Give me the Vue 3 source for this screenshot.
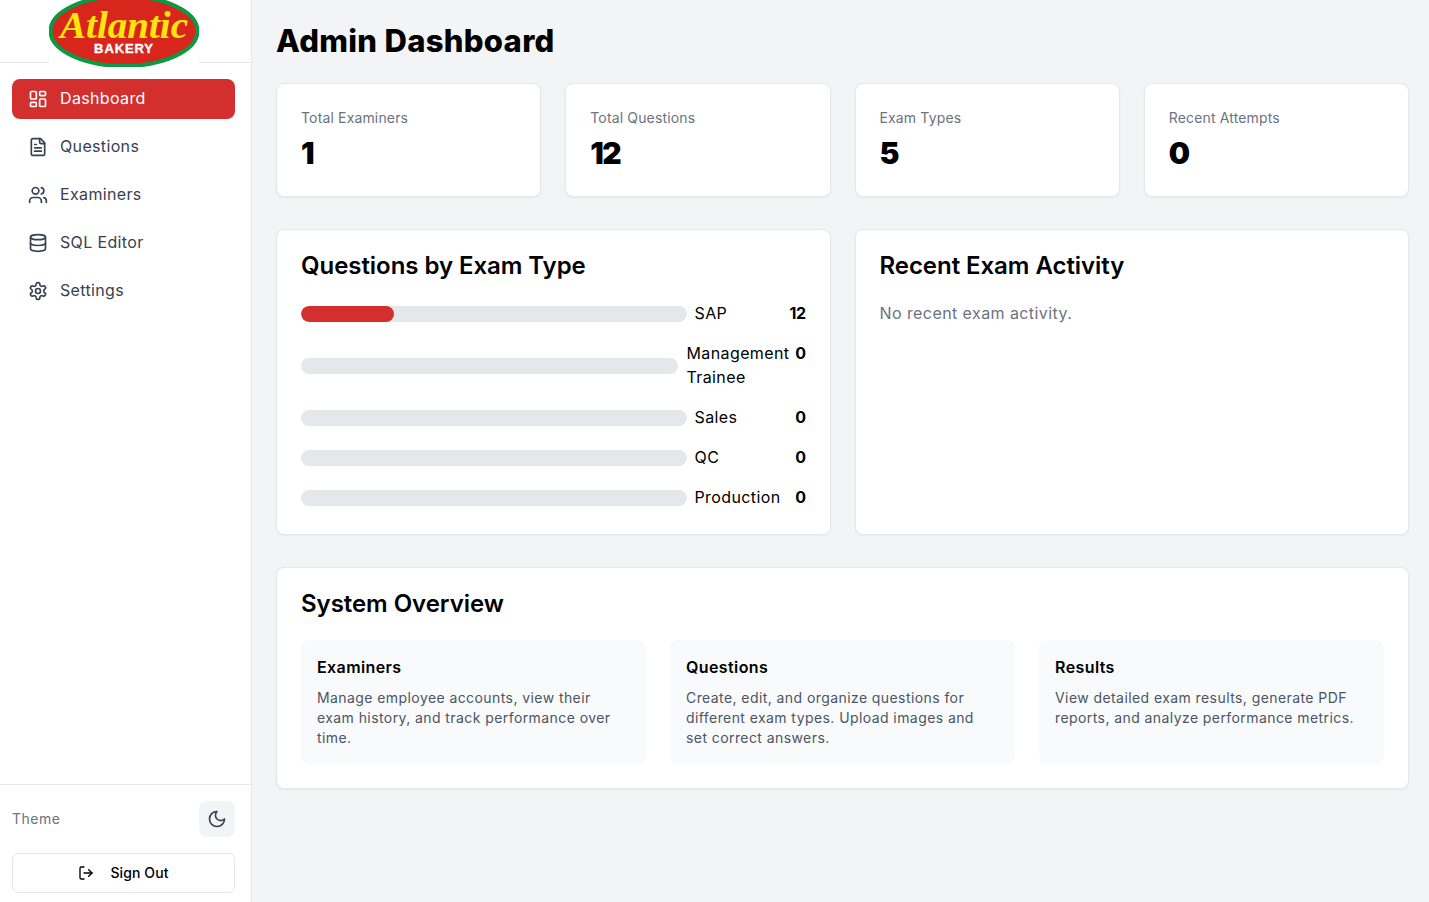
<script setup>
const nav = [
  { label: 'Dashboard', icon: 'dash', active: true },
  { label: 'Questions', icon: 'file' },
  { label: 'Examiners', icon: 'users' },
  { label: 'SQL Editor', icon: 'db' },
  { label: 'Settings', icon: 'gear' },
]
const stats = [
  { label: 'Total Examiners', value: 1 },
  { label: 'Total Questions', value: 12 },
  { label: 'Exam Types', value: 5 },
  { label: 'Recent Attempts', value: 0 },
]
const rows = [
  { label: 'SAP', value: 12, pct: 24 },
  { label: 'Management Trainee', value: 0, pct: 0 },
  { label: 'Sales', value: 0, pct: 0 },
  { label: 'QC', value: 0, pct: 0 },
  { label: 'Production', value: 0, pct: 0 },
]
const tiles = [
  { title: 'Examiners', text: 'Manage employee accounts, view their exam history, and track performance over time.' },
  { title: 'Questions', text: 'Create, edit, and organize questions for different exam types. Upload images and set correct answers.' },
  { title: 'Results', text: 'View detailed exam results, generate PDF reports, and analyze performance metrics.' },
]
</script>

<template>
  <div class="app">
    <aside class="sidebar">
      <div class="brand">
        <svg class="logo" width="150" height="72" viewBox="0 0 150 72">
          <rect x="0" y="0" width="150" height="72" fill="#fff" />
          <ellipse cx="75" cy="36" rx="73.5" ry="35" fill="#d9261c" stroke="#0a9a44" stroke-width="4" />
          <text class="logo-script" x="11" y="42.5" textLength="128" lengthAdjust="spacingAndGlyphs">Atlantic</text>
          <text class="logo-sub" x="75" y="57.5" text-anchor="middle">BAKERY</text>
        </svg>
      </div>
      <nav class="nav">
        <a v-for="item in nav" :key="item.label" class="nav-item" :class="{ active: item.active }">
          <svg class="icon" viewBox="0 0 24 24">
            <template v-if="item.icon === 'dash'">
              <rect x="3" y="3" width="7" height="9" rx="1" />
              <rect x="14" y="3" width="7" height="5" rx="1" />
              <rect x="14" y="12" width="7" height="9" rx="1" />
              <rect x="3" y="16" width="7" height="5" rx="1" />
            </template>
            <template v-else-if="item.icon === 'file'">
              <path d="M15 2H6a2 2 0 0 0-2 2v16a2 2 0 0 0 2 2h12a2 2 0 0 0 2-2V7Z" />
              <path d="M14 2v4a2 2 0 0 0 2 2h4" />
              <path d="M10 9H8" />
              <path d="M16 13H8" />
              <path d="M16 17H8" />
            </template>
            <template v-else-if="item.icon === 'users'">
              <path d="M16 21v-2a4 4 0 0 0-4-4H6a4 4 0 0 0-4 4v2" />
              <circle cx="9" cy="7" r="4" />
              <path d="M22 21v-2a4 4 0 0 0-3-3.87" />
              <path d="M16 3.13a4 4 0 0 1 0 7.75" />
            </template>
            <template v-else-if="item.icon === 'db'">
              <ellipse cx="12" cy="5" rx="9" ry="3" />
              <path d="M3 5V19A9 3 0 0 0 21 19V5" />
              <path d="M3 12A9 3 0 0 0 21 12" />
            </template>
            <template v-else>
              <path d="M12.22 2h-.44a2 2 0 0 0-2 2v.18a2 2 0 0 1-1 1.73l-.43.25a2 2 0 0 1-2 0l-.15-.08a2 2 0 0 0-2.73.73l-.22.38a2 2 0 0 0 .73 2.73l.15.1a2 2 0 0 1 1 1.72v.51a2 2 0 0 1-1 1.74l-.15.09a2 2 0 0 0-.73 2.73l.22.38a2 2 0 0 0 2.73.73l.15-.08a2 2 0 0 1 2 0l.43.25a2 2 0 0 1 1 1.73V20a2 2 0 0 0 2 2h.44a2 2 0 0 0 2-2v-.18a2 2 0 0 1 1-1.73l.43-.25a2 2 0 0 1 2 0l.15.08a2 2 0 0 0 2.73-.73l.22-.39a2 2 0 0 0-.73-2.73l-.15-.08a2 2 0 0 1-1-1.74v-.5a2 2 0 0 1 1-1.74l.15-.09a2 2 0 0 0 .73-2.73l-.22-.38a2 2 0 0 0-2.73-.73l-.15.08a2 2 0 0 1-2 0l-.43-.25a2 2 0 0 1-1-1.73V4a2 2 0 0 0-2-2z" />
              <circle cx="12" cy="12" r="3" />
            </template>
          </svg>
          <span class="nudge">{{ item.label }}</span>
        </a>
      </nav>
      <div class="side-foot">
        <div class="theme-row">
          <span class="theme-label nudge">Theme</span>
          <button class="theme-btn">
            <svg class="icon" viewBox="0 0 24 24"><path d="M12 3a6 6 0 0 0 9 9 9 9 0 1 1-9-9Z" /></svg>
          </button>
        </div>
        <button class="signout">
          <svg class="icon small" viewBox="0 0 24 24">
            <path d="M9 21H5a2 2 0 0 1-2-2V5a2 2 0 0 1 2-2h4" />
            <polyline points="16 17 21 12 16 7" />
            <line x1="21" y1="12" x2="9" y2="12" />
          </svg>
          <span class="nudge">Sign Out</span>
        </button>
      </div>
    </aside>

    <main class="main">
      <h1 class="page-title">Admin Dashboard</h1>

      <section class="stats">
        <div v-for="s in stats" :key="s.label" class="card stat">
          <div class="stat-label">{{ s.label }}</div>
          <div class="stat-value">{{ s.value }}</div>
        </div>
      </section>

      <section class="two">
        <div class="card panel">
          <h2 class="panel-title">Questions by Exam Type</h2>
          <div class="rows">
            <div v-for="r in rows" :key="r.label" class="row">
              <div class="track"><div class="fill" :style="{ width: r.pct + '%' }"></div></div>
              <div class="row-label nudge">{{ r.label }}</div>
              <div class="row-value nudge">{{ r.value }}</div>
            </div>
          </div>
        </div>
        <div class="card panel">
          <h2 class="panel-title">Recent Exam Activity</h2>
          <p class="empty nudge">No recent exam activity.</p>
        </div>
      </section>

      <section class="card panel">
        <h2 class="panel-title">System Overview</h2>
        <div class="tiles">
          <div v-for="t in tiles" :key="t.title" class="tile">
            <h3 class="tile-title">{{ t.title }}</h3>
            <p class="tile-text">{{ t.text }}</p>
          </div>
        </div>
      </section>
    </main>
  </div>
</template>

<style>
html, body { margin: 0; background: #f3f4f6; }
</style>

<style scoped>
.app {
  display: flex;
  min-height: 902px;
  height: 902px;
  overflow: hidden;
  background: #f3f4f6;
  font-family: Inter, "Open Sans", sans-serif;
  color: #000;
}
.nudge { margin-top: -1px; margin-bottom: 1px; }
.sidebar {
  width: 252px;
  flex: none;
  box-sizing: border-box;
  background: #fff;
  border-right: 1px solid #e5e7eb;
  display: flex;
  flex-direction: column;
}
.brand {
  height: 63px;
  box-sizing: border-box;
  border-bottom: 1px solid #e5e7eb;
  position: relative;
}
.logo { position: absolute; left: 49px; top: -5px; }
.logo-script {
  font-family: "Liberation Serif", serif;
  font-style: italic;
  font-weight: 700;
  font-size: 37px;
  fill: #ffe60a;
}
.logo-sub {
  font-family: "Liberation Sans", sans-serif;
  font-weight: 700;
  font-size: 13px;
  letter-spacing: 0.9px;
  fill: #fff;
  stroke: #fff;
  stroke-width: 0.35px;
}
.nav {
  padding: 16px 16px 16px 12px;
  display: flex;
  flex-direction: column;
  gap: 8px;
}
.nav-item {
  height: 40px;
  display: flex;
  align-items: center;
  gap: 12px;
  padding: 0 16px;
  border-radius: 8px;
  font-size: 16px;
  color: #374151;
  letter-spacing: 0.35px;
}
.nav-item.active { background: #d32f2f; color: #fff; }
.icon {
  width: 20px;
  height: 20px;
  flex: none;
  fill: none;
  stroke: currentColor;
  stroke-width: 2;
  stroke-linecap: round;
  stroke-linejoin: round;
}
.icon.small { width: 16px; height: 16px; }
.side-foot {
  margin-top: auto;
  border-top: 1px solid #e5e7eb;
  padding: 16px 16px 9px 12px;
  display: flex;
  flex-direction: column;
  gap: 16px;
}
.theme-row { display: flex; align-items: center; justify-content: space-between; }
.theme-label { font-size: 14px; color: #6b7280; letter-spacing: 0.5px; }
.theme-btn {
  width: 36px;
  height: 36px;
  border: 0;
  padding: 0;
  border-radius: 8px;
  background: #f3f4f6;
  color: #374151;
  display: flex;
  align-items: center;
  justify-content: center;
}
.signout {
  height: 40px;
  box-sizing: border-box;
  border: 1px solid #e5e7eb;
  border-radius: 6px;
  background: #fff;
  display: flex;
  align-items: center;
  justify-content: center;
  gap: 16px;
  font: 500 14px Inter, "Open Sans", sans-serif;
  letter-spacing: 0.1px;
  color: #000;
}
.main {
  flex: 1;
  min-width: 0;
  padding: 23px 20px 0 24px;
}
.page-title {
  margin: 0 0 24px;
  font-size: 31px;
  line-height: 36px;
  font-weight: 800;
  letter-spacing: 0.3px;
}
.card {
  background: #fff;
  border: 1px solid #e5e7eb;
  border-radius: 8px;
  box-sizing: border-box;
  box-shadow: 0 1px 2px rgba(0, 0, 0, 0.05);
}
.stats {
  display: grid;
  grid-template-columns: repeat(4, 1fr);
  gap: 24px;
  margin-bottom: 32px;
}
.stat { padding: 24px; height: 114px; }
.stat-label { font-size: 14px; line-height: 20px; color: #6b7280; letter-spacing: 0.15px; }
.stat-value { margin-top: 6px; font-size: 30px; line-height: 38px; font-weight: 900; letter-spacing: -1.5px; }
.two {
  display: grid;
  grid-template-columns: 1fr 1fr;
  gap: 24px;
  margin-bottom: 32px;
}
.panel { padding: 24px; }
.panel-title {
  margin: 0 0 24px;
  font-size: 24px;
  line-height: 24px;
  font-weight: 600;
  letter-spacing: -0.05px;
}
.rows { display: flex; flex-direction: column; gap: 16px; }
.row { display: flex; align-items: center; font-size: 16px; line-height: 24px; }
.track {
  flex: 1;
  min-width: 0;
  height: 16px;
  border-radius: 8px;
  background: #e5e7eb;
  overflow: hidden;
  margin-right: 8px;
}
.fill { height: 100%; background: #d32f2f; border-radius: 8px; }
.row-label { flex: none; width: 95px; min-width: min-content; letter-spacing: 0.4px; }
.row-value { flex: none; width: 16px; text-align: right; font-weight: 700; letter-spacing: -0.5px; }
.row:nth-child(2) .row-value { align-self: flex-start; }
.empty { margin-top: -1px; margin-left: 0; margin-right: 0; font-size: 16px; line-height: 24px; color: #6b7280; letter-spacing: 0.42px; }
.tiles {
  display: grid;
  grid-template-columns: repeat(3, 1fr);
  gap: 24px;
}
.tile { background: #f9fafb; border-radius: 8px; padding: 16px; }
.tile-title { margin: -1px 0 9px; font-size: 16px; line-height: 24px; font-weight: 600; letter-spacing: 0.4px; }
.tile-text { margin: 0; font-size: 14px; line-height: 20px; color: #4b5563; letter-spacing: 0.42px; }
</style>
